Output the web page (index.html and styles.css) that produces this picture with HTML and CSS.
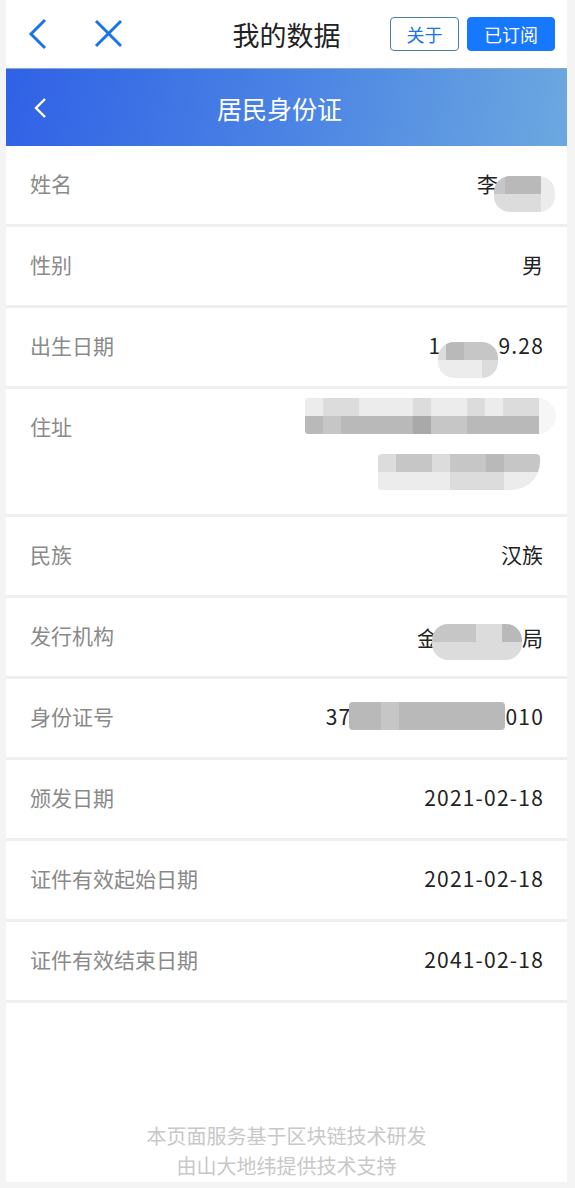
FILE: index.html
```html
<!DOCTYPE html>
<html lang="zh-CN">
<head>
    <meta charset="UTF-8">
    <meta name="viewport" content="width=device-width, initial-scale=1.0">
    <title>我的数据</title>
    <link rel="stylesheet" href="styles.css">
</head>
<body>
    <div class="page">
        <header class="topbar">
            <div class="nav-icons">
                <svg class="icon" width="30" height="34" viewBox="0 0 30 34">
                    <polyline points="20,3 6,17 20,31"></polyline>
                </svg>
                <svg class="icon" width="30" height="34" viewBox="0 0 30 34">
                    <line x1="3" y1="4" x2="28" y2="29"></line>
                    <line x1="28" y1="4" x2="3" y2="29"></line>
                </svg>
            </div>
            <div class="topbar-title">我的数据</div>
            <div class="topbar-actions">
                <button class="btn btn-outline">关于</button>
                <button class="btn btn-fill">已订阅</button>
            </div>
        </header>

        <div class="banner">
            <svg class="banner-back" width="16" height="22" viewBox="0 0 16 22">
                <polyline points="12,2 3,11 12,20"></polyline>
            </svg>
            <div class="banner-title">居民身份证</div>
        </div>

        <div class="info-list">
            <div class="info-row">
                <div class="label">姓名</div>
                <div class="value">李<span class="mosaic m-name">
                    <i class="c2"></i><i class="c1"></i><i class="c1"></i><i class="c4"></i>
                    <i class="c3"></i><i class="c3"></i><i class="c3"></i><i class="c4"></i>
                </span></div>
            </div>
            <div class="info-row">
                <div class="label">性别</div>
                <div class="value">男</div>
            </div>
            <div class="info-row">
                <div class="label">出生日期</div>
                <div class="value num">1<span class="mosaic m-birth">
                    <i class="c3"></i><i class="c1"></i><i class="c2"></i><i class="c2"></i>
                    <i class="c4"></i><i class="c4"></i><i class="c4"></i><i class="c3"></i>
                </span>9.28</div>
            </div>
            <div class="info-row address">
                <div class="label">住址</div>
                <div class="value address-lines">
                    <span class="mosaic m-addr1">
                        <i class="c4"></i><i class="c3"></i><i class="c3"></i><i class="c4"></i><i class="c4"></i><i class="c4"></i><i class="c3"></i><i class="c4"></i><i class="c4"></i><i class="c3"></i><i class="c4"></i><i class="c3"></i><i class="c3"></i><i class="c5"></i>
                        <i class="c1"></i><i class="c2"></i><i class="c1"></i><i class="c1"></i><i class="c1"></i><i class="c1"></i><i class="c0"></i><i class="c2"></i><i class="c2"></i><i class="c1"></i><i class="c1"></i><i class="c1"></i><i class="c1"></i><i class="c5"></i>
                    </span>
                    <span class="addr-line2"><span class="mosaic m-addr2">
                        <i class="c3"></i><i class="c2"></i><i class="c2"></i><i class="c3"></i><i class="c2"></i><i class="c2"></i><i class="c1"></i><i class="c2"></i><i class="c2"></i>
                        <i class="c4"></i><i class="c4"></i><i class="c4"></i><i class="c4"></i><i class="c3"></i><i class="c3"></i><i class="c3"></i><i class="c4"></i><i class="c4"></i>
                    </span></span>
                </div>
            </div>
            <div class="info-row">
                <div class="label">民族</div>
                <div class="value">汉族</div>
            </div>
            <div class="info-row">
                <div class="label">发行机构</div>
                <div class="value">金<span class="mosaic m-org">
                    <i class="c2"></i><i class="c2"></i><i class="c3"></i><i class="c1"></i>
                    <i class="c3"></i><i class="c3"></i><i class="c3"></i><i class="c3"></i>
                </span>局</div>
            </div>
            <div class="info-row">
                <div class="label">身份证号</div>
                <div class="value num">37<span class="mosaic m-id">
                    <i class="c1"></i><i class="c1"></i><i class="c2"></i><i class="c1"></i><i class="c1"></i><i class="c1"></i><i class="c1"></i><i class="c1"></i><i class="c1"></i>
                </span>010</div>
            </div>
            <div class="info-row">
                <div class="label">颁发日期</div>
                <div class="value num">2021-02-18</div>
            </div>
            <div class="info-row">
                <div class="label">证件有效起始日期</div>
                <div class="value num">2021-02-18</div>
            </div>
            <div class="info-row">
                <div class="label">证件有效结束日期</div>
                <div class="value num">2041-02-18</div>
            </div>
        </div>

        <footer class="footer">
            <p>本页面服务基于区块链技术研发</p>
            <p>由山大地纬提供技术支持</p>
        </footer>
    </div>
</body>
</html>
```

FILE: styles.css
```css
* {
    box-sizing: border-box;
}
body {
    margin: 0;
    background: #f4f4f4;
    font-family: "Noto Sans CJK SC", "Noto Sans", sans-serif;
}
.page {
    margin: 0 8px 0 6px;
    height: 1182px;
    background: #fff;
    display: flex;
    flex-direction: column;
}
.topbar {
    height: 68px;
    display: flex;
    align-items: center;
    padding: 0 12px 0 19px;
    position: relative;
}
.nav-icons {
    display: flex;
    gap: 38px;
}
.icon {
    fill: none;
    stroke: #1a73e8;
    stroke-width: 3;
}
.topbar-title {
    position: absolute;
    left: 0;
    right: 0;
    text-align: center;
    font-size: 27px;
    color: #222;
    pointer-events: none;
}
.topbar-actions {
    margin-left: auto;
    display: flex;
    gap: 8px;
}
.btn {
    font-family: inherit;
    font-size: 18px;
    height: 34px;
    border-radius: 4px;
    padding: 0;
    line-height: 30px;
}
.btn-outline {
    width: 69px;
    background: #fff;
    border: 1px solid #4b7ea6;
    color: #1a73e8;
}
.btn-fill {
    width: 88px;
    background: #1677ff;
    border: 1px solid #1677ff;
    color: #fff;
}
.banner {
    height: 78px;
    display: flex;
    align-items: center;
    position: relative;
    background: linear-gradient(100deg, #3061e6 0%, #4a83e4 50%, #6ca8e0 100%);
    border-top: 1px solid #89a7cf;
    padding-left: 27px;
}
.banner-back {
    fill: none;
    stroke: #fff;
    stroke-width: 2.4;
}
.banner-title {
    position: absolute;
    left: 0;
    right: 14px;
    text-align: center;
    color: #fff;
    font-size: 25px;
}
.info-row {
    display: flex;
    justify-content: space-between;
    align-items: flex-start;
    min-height: 81px;
    padding: 22px 24px 0;
    border-bottom: 3px solid #efefef;
    font-size: 21px;
    line-height: 30px;
}
.info-row.address {
    min-height: 128px;
}
.label {
    color: #8a8a8a;
}
.value {
    color: #222;
    display: flex;
    align-items: center;
}
.value.num {
    letter-spacing: 1.2px;
    margin-right: -1px;
}
.mosaic {
    display: inline-grid;
    grid-template-columns: repeat(var(--cols), 18px);
    grid-auto-rows: 18px;
    border-radius: 16px;
    overflow: hidden;
}
.mosaic i {
    display: block;
}
.c0 { background: #a9a9a9; }
.c1 { background: #b9b9b9; }
.c2 { background: #c6c6c6; }
.c3 { background: #dcdcdc; }
.c4 { background: #ececec; }
.c5 { background: #f6f6f6; }
.m-name {
    --cols: 4;
    margin-right: -12px;
    margin-left: -4px;
    grid-template-columns: 11px 18px 18px 14px;
    margin-top: 6px;
    margin-bottom: -16px;
}
.m-birth {
    --cols: 4;
    grid-template-columns: 8px 18px 18px 16px;
    margin: 10px 0 -20px -3px;
}
.m-org {
    --cols: 4;
    grid-template-columns: 18px 26px 26px 20px;
    margin-left: -6px;
    margin-top: 4px;
    margin-bottom: -6px;
}
.m-id {
    --cols: 9;
    grid-template-columns: 14px 18px 18px 18px 18px 18px 18px 18px 16px;
    grid-auto-rows: 28px;
    border-radius: 4px;
    margin: 0 0 0 -2px;
}
.address-lines {
    flex-direction: column;
    align-items: flex-end;
    margin-right: -13px;
    margin-top: -13px;
    gap: 14px;
}
.m-addr1 {
    --cols: 14;
    grid-template-columns: repeat(13, 18px) 17px;
    grid-auto-rows: 18px;
    border-radius: 4px 22px 22px 4px;
}
.addr-line2 {
    margin-right: 16px;
}
.m-addr2 {
    --cols: 9;
    grid-auto-rows: 18px;
    border-radius: 4px 4px 28px 4px;
}
.footer {
    margin-top: auto;
    padding-bottom: 1px;
    text-align: center;
    color: #c8c8c8;
    font-size: 20px;
    line-height: 30px;
}
.footer p {
    margin: 0;
}
```
